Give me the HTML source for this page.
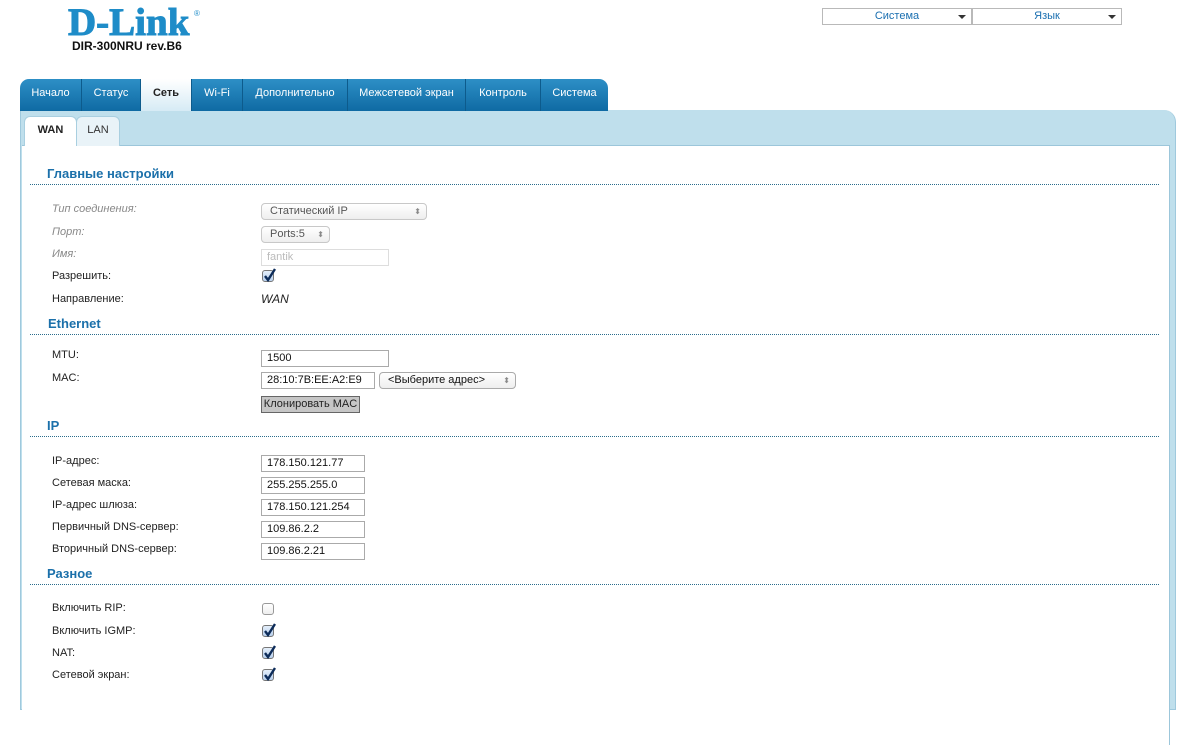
<!DOCTYPE html>
<html><head><meta charset="utf-8">
<style>
*{margin:0;padding:0;box-sizing:border-box}
body{width:1195px;height:693px;overflow:hidden;background:#fff;font-family:"Liberation Sans",Arial,sans-serif;font-size:11px;color:#222;position:relative}
.a{position:absolute}
.logo{left:68px;top:1px;font-family:"Liberation Serif",serif;font-weight:bold;font-size:39px;color:#1e8cc8;letter-spacing:0px;line-height:44px;-webkit-text-stroke:1px #1e8cc8}
.reg{left:194px;top:9px;font-size:8px;color:#1e8cc8}
.model{left:72px;top:39px;font-weight:bold;font-size:12px;color:#111}
.dd{top:8px;height:17px;border:1px solid #b9b9b9;color:#1a6fb0;font-size:11px;line-height:15px;text-align:center}
.dd:after{content:"";position:absolute;right:5px;top:6px;border-left:4px solid transparent;border-right:4px solid transparent;border-top:4px solid #333}
.tabs{left:20px;top:79px;height:32px;width:588px;border-radius:9px 9px 0 0;overflow:hidden;background:linear-gradient(#2d8fc6,#0f6aa3)}
.tab{position:absolute;top:0;height:32px;color:#fff;font-size:11px;line-height:28px;text-align:center;border-right:1px solid #0d5b8c}
.tab.sel{background:linear-gradient(#fff,#d6ebf5);color:#222;font-weight:bold}
.panel{left:20px;top:110px;width:1156px;height:600px;background:#bfdfec;border-radius:0 12px 0 0;border:1px solid #9fc9dd;border-top:none}
.content{left:22px;top:145px;width:1148px;height:600px;background:#fff;border-top:1px solid #9cc6da;border-right:1px solid #9cc6da}
.st{top:116px;height:30px;background:#e9f3f8;border:1px solid #a9cfe0;border-bottom:none;border-radius:6px 6px 0 0;font-size:11px;line-height:26px;text-align:center}
.h{left:47px;font-weight:bold;font-size:13px;color:#1b70aa}
.line{left:30px;width:1129px;border-top:1px dotted #2b6d8c}
.l{left:52px;font-size:11px;color:#222}
.li{color:#888;font-style:italic}
.in{left:261px;height:17px;border:1px solid #aaa;background:#fff;font-size:11px;line-height:15px;padding-left:5px;color:#111}
.sel2{height:17px;border:1px solid #c8c8c8;border-radius:4px;background:linear-gradient(#fff,#eee);font-size:11px;line-height:15px;padding-left:8px;color:#555}
.sel2:after{content:"⬍";position:absolute;right:5px;top:0;font-size:8px;color:#888}
.cb{left:262px;width:12px;height:12px;border:1px solid #777;border-radius:3px;background:linear-gradient(#e4eefa,#b9d1ee)}
.cb svg{position:absolute;left:0;top:-4px}
</style></head><body>
<div class="a logo">D-Link</div>
<div class="a reg">®</div>
<div class="a model">DIR-300NRU rev.B6</div>
<div class="a dd" style="left:822px;width:150px">Система</div>
<div class="a dd" style="left:972px;width:150px">Язык</div>

<div class="a panel"></div>
<div class="a tabs">
<div class="tab" style="left:0;width:62px">Начало</div>
<div class="tab" style="left:62px;width:59px">Статус</div>
<div class="tab sel" style="left:121px;width:51px">Сеть</div>
<div class="tab" style="left:172px;width:51px">Wi-Fi</div>
<div class="tab" style="left:223px;width:105px">Дополнительно</div>
<div class="tab" style="left:328px;width:118px">Межсетевой экран</div>
<div class="tab" style="left:446px;width:75px">Контроль</div>
<div class="tab" style="left:521px;width:67px;border-right:none">Система</div>
</div>
<div class="a content"></div>
<div class="a st" style="left:24px;width:53px;background:#fff;font-weight:bold;height:30px">WAN</div>
<div class="a st" style="left:76px;width:44px;color:#333">LAN</div>

<div class="a h" style="top:166px">Главные настройки</div>
<div class="a line" style="top:184px"></div>
<div class="a l li" style="top:203px">Тип соединения:</div>
<div class="a l li" style="top:226px">Порт:</div>
<div class="a l li" style="top:248px">Имя:</div>
<div class="a l" style="top:270px">Разрешить:</div>
<div class="a l" style="top:293px">Направление:</div>
<div class="a sel2" style="left:261px;top:203px;width:166px">Статический IP</div>
<div class="a sel2" style="left:261px;top:226px;width:69px">Ports:5</div>
<div class="a in" style="top:249px;width:128px;border-color:#ddd;color:#bbb">fantik</div>
<div class="a cb" style="top:270px"><svg width="14" height="16"><path d="M2 9 L5 13 L12 2" stroke="#0d2c5a" stroke-width="2.4" fill="none"/></svg></div>
<div class="a" style="left:261px;top:292px;font-style:italic;font-size:12px">WAN</div>

<div class="a h" style="left:48px;top:316px">Ethernet</div>
<div class="a line" style="top:334px"></div>
<div class="a l" style="top:349px">MTU:</div>
<div class="a l" style="top:372px">MAC:</div>
<div class="a in" style="top:350px;width:128px">1500</div>
<div class="a in" style="top:372px;width:114px">28:10:7B:EE:A2:E9</div>
<div class="a sel2" style="left:379px;top:372px;width:137px;color:#111;border-color:#aaa">&lt;Выберите адрес&gt;</div>
<div class="a" style="left:261px;top:396px;width:99px;height:17px;border:1px solid #666;background:#c6c6c6;font-size:11px;line-height:15px;text-align:center">Клонировать MAC</div>

<div class="a h" style="top:418px">IP</div>
<div class="a line" style="top:436px"></div>
<div class="a l" style="top:455px">IP-адрес:</div>
<div class="a l" style="top:477px">Сетевая маска:</div>
<div class="a l" style="top:499px">IP-адрес шлюза:</div>
<div class="a l" style="top:521px">Первичный DNS-сервер:</div>
<div class="a l" style="top:543px">Вторичный DNS-сервер:</div>
<div class="a in" style="top:455px;width:104px">178.150.121.77</div>
<div class="a in" style="top:477px;width:104px">255.255.255.0</div>
<div class="a in" style="top:499px;width:104px">178.150.121.254</div>
<div class="a in" style="top:521px;width:104px">109.86.2.2</div>
<div class="a in" style="top:543px;width:104px">109.86.2.21</div>

<div class="a h" style="top:566px">Разное</div>
<div class="a line" style="top:584px"></div>
<div class="a l" style="top:602px">Включить RIP:</div>
<div class="a l" style="top:625px">Включить IGMP:</div>
<div class="a l" style="top:647px">NAT:</div>
<div class="a l" style="top:669px">Сетевой экран:</div>
<div class="a cb" style="top:603px;background:linear-gradient(#fff,#eee);border-color:#999"></div>
<div class="a cb" style="top:625px"><svg width="14" height="16"><path d="M2 9 L5 13 L12 2" stroke="#0d2c5a" stroke-width="2.4" fill="none"/></svg></div>
<div class="a cb" style="top:647px"><svg width="14" height="16"><path d="M2 9 L5 13 L12 2" stroke="#0d2c5a" stroke-width="2.4" fill="none"/></svg></div>
<div class="a cb" style="top:669px"><svg width="14" height="16"><path d="M2 9 L5 13 L12 2" stroke="#0d2c5a" stroke-width="2.4" fill="none"/></svg></div>
</body></html>
